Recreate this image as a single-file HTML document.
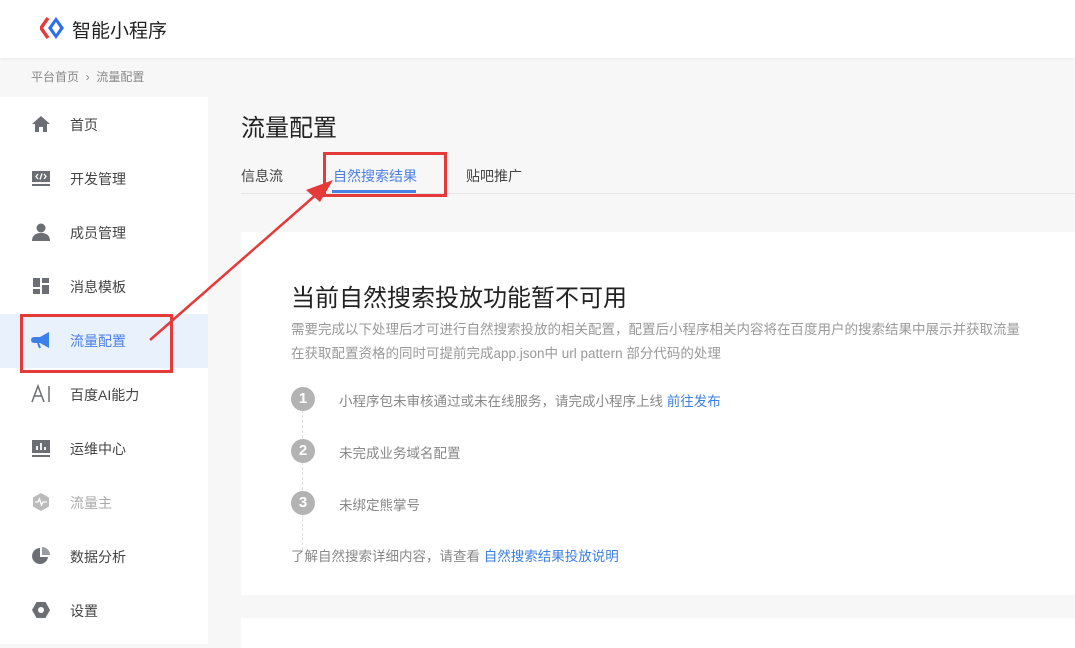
<!DOCTYPE html>
<html><head><meta charset="utf-8"><style>
*{margin:0;padding:0;box-sizing:border-box}
body{width:1075px;height:644px;overflow:hidden;background:#f7f7f8;font-family:"Liberation Sans","Noto Sans CJK SC",sans-serif;position:relative;color:#333}
.hd{position:absolute;left:0;top:0;width:1075px;height:58px;background:#fff;box-shadow:0 1px 3px rgba(0,0,0,.06)}
.logo{position:absolute;left:40px;top:16px}
.hd .t{position:absolute;left:72px;top:16px;font-size:19px;color:#222}
.bc{position:absolute;left:31px;top:68px;font-size:12px;color:#888}
.sb{position:absolute;left:0;top:97px;width:208px;height:547px;background:#fff}
.it{position:absolute;left:0;width:208px;height:54px;font-size:14px;color:#444}
.it span{position:absolute;left:70px;top:17px}
.it svg{position:absolute;left:31px;top:16px}
.act{background:#e9f1fd;color:#4b7ee6}
.h1{position:absolute;left:241px;top:108px;font-size:24px;color:#222}
.tabs{position:absolute;left:241px;top:193px;width:834px;height:1px;background:#e5e5e5}
.tab{position:absolute;top:166px;font-size:14px;color:#444}
.card{position:absolute;left:241px;top:232px;width:834px;height:363px;background:#fff}
.card2{position:absolute;left:241px;top:618px;width:834px;height:30px;background:#fff}
.ct{position:absolute;left:50px;top:46px;font-size:24px;color:#222}
.ds{position:absolute;left:50px;font-size:13.5px;color:#999;white-space:nowrap}
.n{position:absolute;left:50px;width:24px;height:24px;border-radius:50%;background:#b3b3b3;color:#fff;font-size:15px;text-align:center;line-height:24px;font-weight:bold}
.st{position:absolute;left:98px;font-size:13.5px;color:#888}
a{color:#3b7fe0;text-decoration:none}
.dl{position:absolute;left:61px;width:0;border-left:1px dashed #ddd}
.rb{position:absolute;border:3px solid #e43a3a}
</style></head><body>
<div class="hd">
<svg class="logo" width="26" height="24" viewBox="0 0 26 24"><path d="M8 2 L1 12 L8 22" stroke="#e43a3a" stroke-width="3.5" fill="none"/><path d="M16 1 L24 12 L16 23 L8 12 Z" fill="#2e6fe8"/><path d="M16 6 L20 12 L16 18 L12 12Z" fill="#fff"/></svg>
<div class="t">智能小程序</div></div>
<div class="bc">平台首页 &nbsp;›&nbsp; 流量配置</div>
<div class="sb">
<div class="it" style="top:1px"><svg width="20" height="20" viewBox="0 0 20 20"><path d="M10 2L1 10h3v8h4v-5h4v5h4v-8h3z" fill="#6b6e73"/></svg><span>首页</span></div>
<div class="it" style="top:55px"><svg width="20" height="20" viewBox="0 0 20 20"><rect x="1" y="3" width="18" height="11" fill="#6b6e73"/><path d="M7 6l-2 2.5L7 11M13 6l2 2.5L13 11M11 5.5L9 11.5" stroke="#fff" stroke-width="1.3" fill="none"/><rect x="1" y="16" width="18" height="2" fill="#6b6e73"/></svg><span>开发管理</span></div>
<div class="it" style="top:109px"><svg width="20" height="20" viewBox="0 0 20 20"><circle cx="10" cy="6" r="4.5" fill="#6b6e73"/><path d="M1 19c0-6 4-8 9-8s9 2 9 8z" fill="#6b6e73"/></svg><span>成员管理</span></div>
<div class="it" style="top:163px"><svg width="20" height="20" viewBox="0 0 20 20"><rect x="2" y="2" width="7" height="9" fill="#6b6e73"/><rect x="11" y="2" width="7" height="5" fill="#6b6e73"/><rect x="2" y="13" width="7" height="5" fill="#6b6e73"/><rect x="11" y="9" width="7" height="9" fill="#6b6e73"/></svg><span>消息模板</span></div>
<div class="it act" style="top:217px"><svg width="22" height="20" viewBox="0 0 22 20"><path d="M3 7h6l9-5v16l-9-5H3z" fill="#3b7fe8"/><circle cx="3" cy="10" r="3" fill="#3b7fe8"/><path d="M7 13l2 5" stroke="#3b7fe8" stroke-width="2"/></svg><span>流量配置</span></div>
<div class="it" style="top:271px"><svg width="24" height="20" viewBox="0 0 24 20"><path d="M1 18L7 2L13 18M3.5 12h7M18 2v16" stroke="#6b6e73" stroke-width="1.5" fill="none"/></svg><span>百度AI能力</span></div>
<div class="it" style="top:325px"><svg width="20" height="20" viewBox="0 0 20 20"><rect x="1" y="2" width="18" height="13" fill="#6b6e73"/><path d="M6 12V8M10 12V5M14 12V9" stroke="#fff" stroke-width="1.8"/><rect x="1" y="17" width="18" height="2" fill="#6b6e73"/></svg><span>运维中心</span></div>
<div class="it" style="top:379px;color:#aaa"><svg width="20" height="20" viewBox="0 0 20 20"><path d="M10 1l8 4.5v9L10 19l-8-4.5v-9z" fill="#bbb"/><path d="M4 10h3l1.5-3 2 6 1.5-3h4" stroke="#fff" stroke-width="1.3" fill="none"/></svg><span>流量主</span></div>
<div class="it" style="top:433px"><svg width="20" height="20" viewBox="0 0 20 20"><path d="M9 2a8 8 0 1 0 8 9H9z" fill="#6b6e73"/><path d="M11 1v8h8a8 8 0 0 0-8-8z" fill="#9a9ca0"/></svg><span>数据分析</span></div>
<div class="it" style="top:487px"><svg width="20" height="20" viewBox="0 0 20 20"><path d="M5.5 2h9l4.5 8-4.5 8h-9L1 10z" fill="#6b6e73"/><circle cx="10" cy="10" r="3" fill="#fff"/></svg><span>设置</span></div>
</div>
<div class="rb" style="left:20px;top:314px;width:153px;height:59px"></div>
<div class="h1">流量配置</div>
<div class="tabs"></div>
<div class="tab" style="left:241px">信息流</div>
<div class="tab" style="left:333px;color:#4b7ee6">自然搜索结果</div>
<div style="position:absolute;left:332px;top:190px;width:84px;height:3px;background:#4b7ee6"></div>
<div class="tab" style="left:466px">贴吧推广</div>
<div class="rb" style="left:323px;top:152px;width:124px;height:45px"></div>
<div class="card">
<div class="ct">当前自然搜索投放功能暂不可用</div>
<div class="ds" style="top:86px">需要完成以下处理后才可进行自然搜索投放的相关配置，配置后小程序相关内容将在百度用户的搜索结果中展示并获取流量</div>
<div class="ds" style="top:110px">在获取配置资格的同时可提前完成app.json中 url pattern 部分代码的处理</div>
<div class="dl" style="top:178px;height:28px"></div>
<div class="dl" style="top:230px;height:28px"></div>
<div class="dl" style="top:282px;height:36px"></div>
<div class="n" style="top:155px">1</div><div class="st" style="top:158px">小程序包未审核通过或未在线服务，请完成小程序上线 <a>前往发布</a></div>
<div class="n" style="top:207px">2</div><div class="st" style="top:210px">未完成业务域名配置</div>
<div class="n" style="top:259px">3</div><div class="st" style="top:262px">未绑定熊掌号</div>
<div class="ds" style="top:313px;color:#888">了解自然搜索详细内容，请查看 <a>自然搜索结果投放说明</a></div>
</div>
<div class="card2"></div>
<svg style="position:absolute;left:0;top:0" width="1075" height="644"><line x1="150" y1="340" x2="318" y2="193" stroke="#e43a3a" stroke-width="2.5"/><path d="M333 180L306 190L320 202Z" fill="#e43a3a"/></svg>
</body></html>
